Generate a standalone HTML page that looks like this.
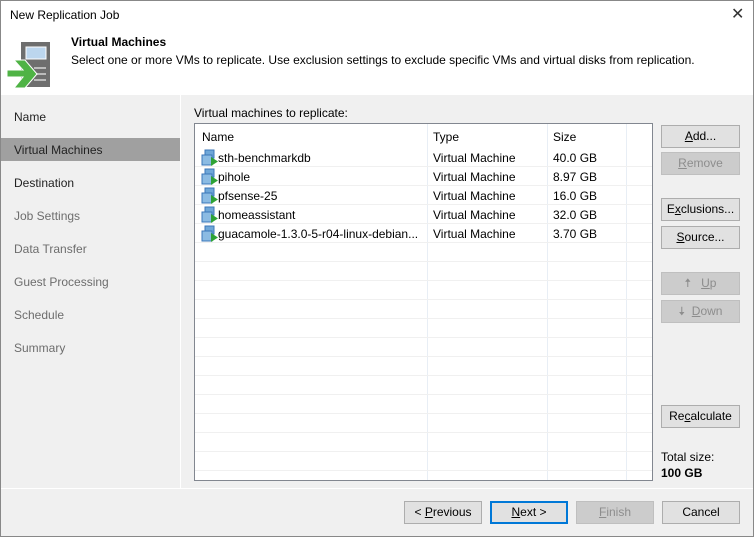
<!DOCTYPE html>
<html><head><style>
*{margin:0;padding:0;box-sizing:border-box}
body{width:754px;height:537px;overflow:hidden;font-family:"Liberation Sans",sans-serif;font-size:12px;color:#000;background:#f0f0f0;position:relative}
.a{position:absolute}
.win{left:0;top:0;width:754px;height:537px;border:1px solid #888}
.nav{left:14px;font-size:12px;color:#222}
.dis{color:#6d6d6d}
.btn{position:absolute;height:23px;background:#e1e1e1;border:1px solid #adadad;text-align:center;line-height:21px;font-size:12px}
.btn.d{background:#cccccc;border-color:#bfbfbf;color:#8d8d8d}
.row{position:absolute;left:0;width:458px;height:19px;border-bottom:1px solid #f0f0f0}
u{text-decoration:underline}
</style></head><body>
<div class="a win"></div>
<div class="a" style="left:1px;top:1px;width:752px;height:94px;background:#fff"></div>
<div class="a" style="left:10px;top:8px;font-size:12px">New Replication Job</div>
<div class="a" style="left:731px;top:4px;font-size:16px;color:#333">✕</div>
<svg class="a" style="left:6px;top:42px" width="46" height="48">
<rect x="15" y="0" width="29" height="45" fill="#6e6e6e"/>
<rect x="20" y="5" width="20" height="12" fill="#bcd6ee" stroke="#fff" stroke-width="1"/>
<rect x="28" y="25" width="12" height="2" fill="#bbb"/>
<rect x="28" y="31" width="12" height="2" fill="#bbb"/>
<rect x="28" y="37" width="12" height="2" fill="#bbb"/>
<path d="M1 28 H17 L8 18 H19 L31 32 L19 46 H8 L17 35 H1 Z" fill="#4fb345" stroke="#fff" stroke-width="1"/>
</svg>
<div class="a" style="left:71px;top:35px;font-weight:bold">Virtual Machines</div>
<div class="a" style="left:71px;top:53px">Select one or more VMs to replicate. Use exclusion settings to exclude specific VMs and virtual disks from replication.</div>
<div class="a" style="left:180px;top:95px;width:1px;height:393px;background:#fff"></div>
<div class="a" style="left:1px;top:138px;width:179px;height:23px;background:#a0a0a0"></div>
<div class="a nav" style="top:110px">Name</div>
<div class="a nav" style="top:143px">Virtual Machines</div>
<div class="a nav" style="top:176px">Destination</div>
<div class="a nav dis" style="top:209px">Job Settings</div>
<div class="a nav dis" style="top:242px">Data Transfer</div>
<div class="a nav dis" style="top:275px">Guest Processing</div>
<div class="a nav dis" style="top:308px">Schedule</div>
<div class="a nav dis" style="top:341px">Summary</div>
<div class="a" style="left:194px;top:106px">Virtual machines to replicate:</div>
<div class="a" style="left:194px;top:123px;width:459px;height:358px;background:#fff;border:1px solid #828790;overflow:hidden">
<div class="a" style="left:232px;top:0;width:1px;height:356px;background:#e8eef5"></div>
<div class="a" style="left:352px;top:0;width:1px;height:356px;background:#e8eef5"></div>
<div class="a" style="left:431px;top:0;width:1px;height:356px;background:#e8eef5"></div>
<div class="a" style="left:7px;top:6px">Name</div><div class="a" style="left:238px;top:6px">Type</div><div class="a" style="left:358px;top:6px">Size</div>
</div>
<div id="rows" class="a" style="left:195px;top:148px;width:457px;height:332px;overflow:hidden">
<script>
var d=[["sth-benchmarkdb","40.0 GB"],["pihole","8.97 GB"],["pfsense-25","16.0 GB"],["homeassistant","32.0 GB"],["guacamole-1.3.0-5-r04-linux-debian...","3.70 GB"]];
var h="";
for(var i=0;i<18;i++){var t=i*19;h+='<div class="row" style="top:'+t+'px"></div>';
if(d[i]){h+='<svg class="a" style="left:6px;top:'+(t+1)+'px" width="18" height="18"><rect x="4" y="1" width="9" height="8" fill="#6fa7d8" stroke="#3b77b8"/><rect x="1" y="6" width="10" height="10" fill="#8bbbe3" stroke="#3b77b8"/><path d="M10 8 L17 12.5 L10 17 Z" fill="#2ea236"/></svg>'+
'<div class="a" style="left:23px;top:'+(t+3)+'px">'+d[i][0]+'</div><div class="a" style="left:238px;top:'+(t+3)+'px">Virtual Machine</div><div class="a" style="left:358px;top:'+(t+3)+'px">'+d[i][1]+'</div>';}}
document.write(h);
</script>
</div>
<div class="btn" style="left:661px;top:125px;width:79px"><u>A</u>dd...</div>
<div class="btn d" style="left:661px;top:152px;width:79px"><u>R</u>emove</div>
<div class="btn" style="left:661px;top:198px;width:79px">E<u>x</u>clusions...</div>
<div class="btn" style="left:661px;top:226px;width:79px"><u>S</u>ource...</div>
<div class="btn d" style="left:661px;top:272px;width:79px">🠅&nbsp;&nbsp;&nbsp;<u>U</u>p</div>
<div class="btn d" style="left:661px;top:300px;width:79px">🠇&nbsp;&nbsp;<u>D</u>own</div>
<div class="btn" style="left:661px;top:405px;width:79px">Re<u>c</u>alculate</div>
<div class="a" style="left:661px;top:450px">Total size:</div>
<div class="a" style="left:661px;top:466px;font-weight:bold">100 GB</div>
<div class="a" style="left:1px;top:488px;width:752px;height:1px;background:#fff"></div>
<div class="btn" style="left:404px;top:501px;width:78px">&lt; <u>P</u>revious</div>
<div class="btn" style="left:490px;top:501px;width:78px;border:2px solid #0078d7;line-height:19px"><u>N</u>ext &gt;</div>
<div class="btn d" style="left:576px;top:501px;width:78px"><u>F</u>inish</div>
<div class="btn" style="left:662px;top:501px;width:78px">Cancel</div>
</body></html>
